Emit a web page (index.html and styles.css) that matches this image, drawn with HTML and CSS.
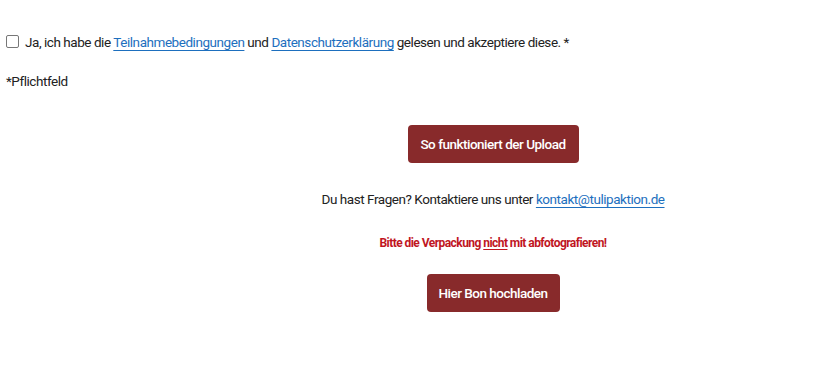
FILE: index.html
```html
<!DOCTYPE html>
<html lang="de">
<head>
    <meta charset="UTF-8">
    <title>Bon hochladen</title>
    <link rel="stylesheet" href="styles.css">
</head>
<body>
    <div class="form">
        <label class="consent">
            <span class="box"></span>
            <span>Ja, ich habe die <a href="#">Teilnahmebedingungen</a> und <a href="#">Datenschutzerklärung</a> gelesen und akzeptiere diese. *</span>
        </label>
        <p class="required">*Pflichtfeld</p>
        <div class="actions">
            <button class="btn btn-info">So funktioniert der Upload</button>
            <p class="contact">Du hast Fragen? Kontaktiere uns unter <a href="#">kontakt@tulipaktion.de</a></p>
            <p class="warning">Bitte die Verpackung <u>nicht</u> mit abfotografieren!</p>
            <button class="btn btn-upload">Hier Bon hochladen</button>
        </div>
    </div>
</body>
</html>
```

FILE: styles.css
```css
:root {
    --brand-red: #882a2b;
    --link-blue: #1d6fbe;
    --text: #222;
}

body {
    margin: 0;
    background-color: #fff;
    color: var(--text);
    font-family: Roboto, "Liberation Sans", sans-serif;
    font-size: 13.5px;
    letter-spacing: -0.45px;
}

a {
    color: var(--link-blue);
    text-decoration: underline;
    text-underline-offset: 3px;
}

.form {
    padding: 33px 6px 0 6px;
}

.consent {
    display: flex;
    align-items: center;
    gap: 6px;
    height: 17px;
}

.box {
    width: 11px;
    height: 11px;
    border: 1px solid #777;
    border-radius: 2px;
}

.required {
    margin: 23px 0 0;
    line-height: 17px;
}

.actions {
    display: flex;
    flex-direction: column;
    align-items: center;
    padding-left: 162px;
    margin-top: 35px;
}

.btn {
    height: 38px;
    padding: 0;
    border: none;
    border-radius: 4px;
    background-color: var(--brand-red);
    color: #fff;
    font-family: inherit;
    font-size: 13.5px;
    font-weight: 500;
    letter-spacing: -0.5px;
    white-space: nowrap;
}

.btn-info {
    width: 171px;
}

.btn-upload {
    width: 133px;
    margin-top: 23px;
}

.contact {
    margin: 28px 0 0;
    line-height: 17px;
}

.warning {
    margin: 28px 0 0;
    color: #c0161f;
    font-size: 12px;
    font-weight: bold;
    line-height: 15px;
    letter-spacing: -0.55px;
}

.warning u {
    text-underline-offset: 2px;
}
```
